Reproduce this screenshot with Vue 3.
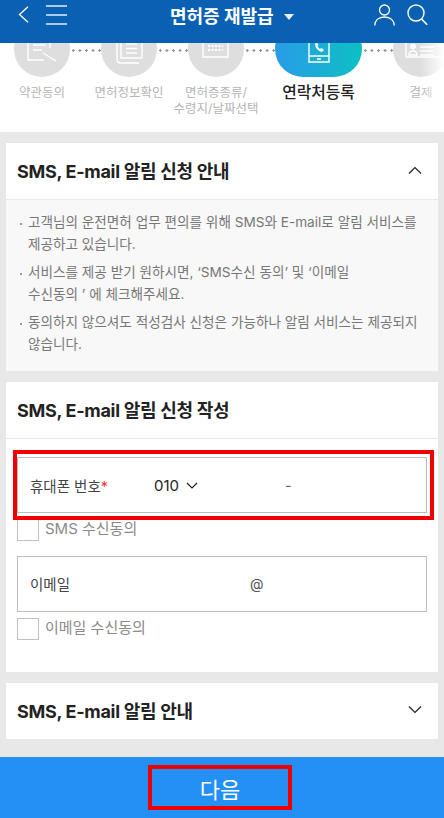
<template>
  <div class="page">
    <header class="topbar">
      <svg class="ic-back" width="11" height="17" viewBox="0 0 11 17"><path d="M10 .8 1.500 8.500l8.500 7.700" fill="none" stroke="#fff" stroke-width="1.300" /></svg>
      <svg class="ic-menu" width="21" height="20" viewBox="0 0 21 20"><path d="M0 1h21M0 10h21M0 19h21" fill="none" stroke="#dfeeff" stroke-width="1.300" /></svg>
      <div class="top-title">면허증 재발급<span class="caret"></span></div>
      <svg class="ic-user" width="21" height="22" viewBox="0 0 21 22"><circle cx="10.500" cy="6" r="5" fill="none" stroke="#fff" stroke-width="1.300" /><path d="M.7 21.500c0-5 3.800-8.500 9.800-8.500s9.800 3.500 9.800 8.500" fill="none" stroke="#fff" stroke-width="1.300" /></svg>
      <svg class="ic-search" width="21" height="21" viewBox="0 0 21 21"><circle cx="9" cy="9" r="8" fill="none" stroke="#fff" stroke-width="1.400" /><path d="m14.500 15 5.700 5.700" fill="none" stroke="#fff" stroke-width="1.600" /></svg>
    </header>

    <section class="stepper">
      <div class="step-row">
        <template v-for="(s, i) in steps" :key="s.label">
          <div :class="['step', { on: s.on }]">
            <div class="disc">
              <svg :width="s.on ? 87 : 56" height="56" :viewBox="s.on ? '0 0 87 56' : '0 0 56 56'">
                <path :d="s.icon" fill="none" stroke="#fff" stroke-width="1.400" />
                <path v-if="s.fill" :d="s.fill" fill="#fff" />
                <path v-if="s.dots" :d="s.dots" fill="none" stroke="#fff" stroke-width="2" stroke-dasharray="2 1.500" />
              </svg>
            </div>
            <div class="step-label">
              <span v-for="l in s.lines" :key="l">{{ l }}</span>
            </div>
          </div>
          <div v-if="i < steps.length - 1" class="dots"></div>
        </template>
      </div>
    </section>

    <main class="cards">
      <section class="card">
        <div class="card-head">
          <h2>SMS, E-mail 알림 신청 안내</h2>
          <svg width="14" height="8" viewBox="0 0 14 8"><path d="M1 7.500 7 1.500l6 6" fill="none" stroke="#222" stroke-width="1.200" /></svg>
        </div>
        <ul class="notice">
          <li>고객님의 운전면허 업무 편의를 위해 SMS와 E-mail로 알림 서비스를 제공하고 있습니다.</li>
          <li>서비스를 제공 받기 원하시면, ‘SMS수신 동의’ 및 ‘이메일<br />수신동의 ’ 에 체크해주세요.</li>
          <li>동의하지 않으셔도 적성검사 신청은 가능하나 알림 서비스는 제공되지 않습니다.</li>
        </ul>
      </section>

      <section class="card">
        <div class="card-head">
          <h2>SMS, E-mail 알림 신청 작성</h2>
        </div>
        <div class="form">
          <div class="field">
            <span class="field-label">휴대폰 번호<em>*</em></span>
            <span class="carrier">010
              <svg width="12" height="7" viewBox="0 0 12 7"><path d="M1 1l5 5 5-5" fill="none" stroke="#222" stroke-width="1.200" /></svg>
            </span>
            <span class="dash">-</span>
            <div class="mark"></div>
          </div>
          <label class="check"><span class="box"></span>SMS 수신동의</label>
          <div class="field">
            <span class="field-label raised">이메일</span>
            <span class="at">@</span>
          </div>
          <label class="check"><span class="box"></span>이메일 수신동의</label>
        </div>
      </section>

      <section class="card">
        <div class="card-head closed">
          <h2>SMS, E-mail 알림 안내</h2>
          <svg width="14" height="8" viewBox="0 0 14 8"><path d="M1 .5l6 6 6-6" fill="none" stroke="#222" stroke-width="1.200" /></svg>
        </div>
      </section>
    </main>

    <footer class="bottom">
      <button type="button" class="next">다음</button>
    </footer>
  </div>
</template>

<script setup>
const steps = [
  {
    label: "약관동의",
    lines: ["약관동의"],
    icon: "M14 0V39H30M36 0V27M19 24h13M19 29h9M29 32l13 8",
  },
  {
    label: "면허정보확인",
    lines: ["면허정보확인"],
    icon: "M16 0V38q0 4 4 4H38M20 0V37H41V0M25 23h11M25 27.500h11M25 32h11",
  },
  {
    label: "면허증종류",
    lines: ["면허증종류/", "수령지/날짜선택"],
    icon: "M15 0V36H40V0",
    dots: "M20 25h15M20 29h15",
  },
  {
    label: "연락처등록",
    lines: ["연락처등록"],
    on: true,
    icon: "M34 0V41H54V0M34 35H54M42 38h4",
    fill: "M40 23c.5 4 3 7 7 8l2-2-2.500-2-1.500 1c-1-.6-2-1.700-2.500-2.800l1-1.500-2-2.500z",
  },
  {
    label: "결제",
    lines: ["결제"],
    icon: "M13 0V36H52V0M16 34c0-3 1.500-4 4-4s4 1 4 4zM27 26h14M27 30h14M27 34h14",
    fill: "M20 22.500a3 3 0 1 0 .01 0z",
  },
];
</script>

<style>
html,
body {
  margin: 0;
  background: #e8e8e8;
}
</style>

<style scoped>
.page {
  width: 444px;
  height: 818px;
  overflow: hidden;
  display: flex;
  flex-direction: column;
  background: #e8e8e8;
  font-family: "Inter", "Noto Sans CJK KR", sans-serif;
  color: #222;
}

.topbar {
  height: 43px;
  flex: none;
  display: flex;
  align-items: center;
  padding: 0 16px 14px 18px;
  box-sizing: border-box;
  background: #0a61b4;
}

.ic-menu {
  margin-left: 17px;
}

.top-title {
  margin-left: 103px;
  color: #fff;
  font-size: 18px;
  font-weight: 700;
  white-space: nowrap;
}

.caret {
  display: inline-block;
  border: 5px solid transparent;
  border-top: 6px solid #eaf2fb;
  border-bottom: 0;
  margin-left: 10px;
  vertical-align: 3px;
}

.ic-user {
  margin-left: auto;
}

.ic-search {
  margin-left: 12px;
}

.stepper {
  position: relative;
  height: 89px;
  flex: none;
  background: #fff;
  overflow: hidden;
}

.stepper::after {
  content: "";
  position: absolute;
  top: 0;
  right: 0;
  bottom: 0;
  width: 24px;
  background: linear-gradient(90deg, rgba(255, 255, 255, 0), #fff);
}

.step-row {
  display: flex;
  margin-top: -22px;
  padding-left: 14px;
}

.step {
  flex: none;
  display: flex;
  flex-direction: column;
  align-items: center;
  width: 56px;
}

.disc {
  width: 56px;
  height: 56px;
  flex: none;
  border-radius: 50%;
  background: #dedede;
  overflow: hidden;
}

.disc svg {
  display: block;
}

.step.on {
  width: 87px;
}

.step.on .disc {
  width: 87px;
  border-radius: 28px;
  background: linear-gradient(90deg, #2a9be8, #0cc0c4);
}

.step-label {
  display: flex;
  flex-direction: column;
  align-items: center;
  margin-top: 8px;
  font-size: 12.500px;
  line-height: 16px;
  color: #b5b5b5;
  white-space: nowrap;
}

.step.on .step-label {
  margin-top: 6px;
  font-size: 15.800px;
  line-height: 20px;
  font-weight: 500;
  color: #222;
}

.dots {
  flex: none;
  width: 31px;
  height: 3px;
  margin-top: 28px;
  background: radial-gradient(circle, #8c8c8c 1px, transparent 1.400px) 0 0 / 6.600px 3px;
}

.cards {
  flex: 1;
  display: flex;
  flex-direction: column;
  gap: 11px;
  padding: 11px 6px 0;
}

.card {
  background: #fff;
}

.card-head {
  height: 57px;
  display: flex;
  align-items: center;
  justify-content: space-between;
  padding: 0 16px 2px 11px;
  border-bottom: 1px solid #e9e9e9;
  box-sizing: border-box;
}

.card-head.closed {
  height: 56px;
  border-bottom: 0;
}

h2 {
  margin: 0;
  font-size: 18px;
  font-weight: 700;
  letter-spacing: -0.3px;
  color: #222;
}

.notice {
  margin: 0;
  padding: 11px 16px 16px 22px;
  list-style: none;
  background: #f8f8f8;
  font-size: 13.600px;
  line-height: 22px;
  color: #777;
}

.notice li {
  position: relative;
  margin-bottom: 6px;
}

.notice li:last-child {
  margin-bottom: 0;
}

.notice li::before {
  content: "";
  position: absolute;
  left: -8px;
  top: 12px;
  width: 2px;
  height: 2px;
  border-radius: 50%;
  background: #777;
}

.form {
  padding: 18px 11px 32px;
}

.field {
  position: relative;
  height: 56px;
  display: flex;
  align-items: center;
  padding: 0 12px;
  border: 1px solid #bcbcbc;
  box-sizing: border-box;
  font-size: 14.500px;
}

.field-label {
  color: #444;
  width: 124px;
  flex: none;
}

.field-label.raised {
  padding-bottom: 2px;
}

.field-label em {
  color: #f03c3c;
  font-style: normal;
}

.carrier {
  font-size: 15px;
  display: flex;
  align-items: center;
  gap: 7px;
}

.dash {
  margin-left: 87px;
  color: #666;
}

.at {
  margin-left: 96px;
  padding-bottom: 2px;
  font-size: 14px;
  color: #555;
}

.mark {
  position: absolute;
  inset: -8px -8px -8px -5px;
  border: 4px solid #f00000;
  pointer-events: none;
}

.check {
  display: flex;
  align-items: flex-start;
  gap: 6px;
  height: 22px;
  margin: 6px 0 15px;
  font-size: 15px;
  line-height: 20px;
  color: #8a8a8a;
}

.check:last-child {
  margin-bottom: 0;
}

.box {
  width: 22px;
  height: 22px;
  border: 1px solid #c0c0c0;
  box-sizing: border-box;
  background: #fff;
}

.bottom {
  height: 61px;
  flex: none;
  display: flex;
  align-items: center;
  justify-content: center;
  background: #2490f5;
}

.next {
  width: 144px;
  height: 45px;
  box-sizing: border-box;
  margin-right: 4px;
  border: 4px solid #ee0000;
  background: transparent;
  color: #fff;
  font: inherit;
  font-size: 22px;
  padding: 0;
}
</style>
